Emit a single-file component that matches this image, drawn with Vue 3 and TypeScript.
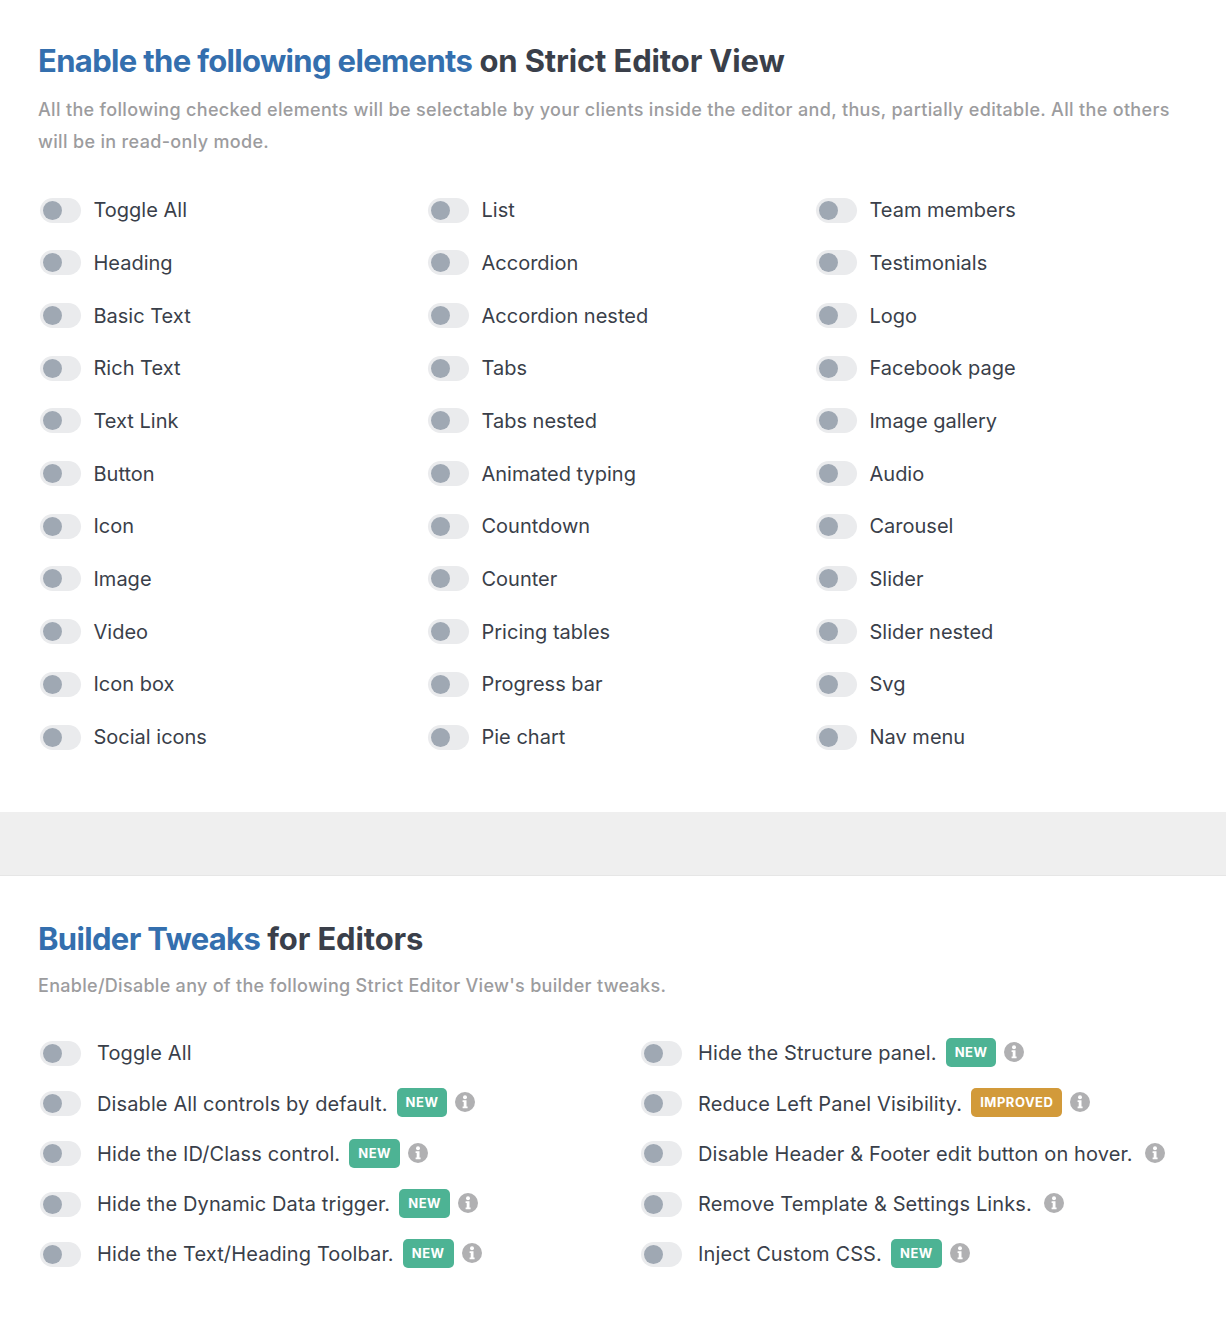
<script setup lang="ts">
interface Tweak { label: string; badge?: 'NEW' | 'IMPROVED'; info?: boolean }

const elementColumns: string[][] = [
  ['Toggle All', 'Heading', 'Basic Text', 'Rich Text', 'Text Link', 'Button', 'Icon', 'Image', 'Video', 'Icon box', 'Social icons'],
  ['List', 'Accordion', 'Accordion nested', 'Tabs', 'Tabs nested', 'Animated typing', 'Countdown', 'Counter', 'Pricing tables', 'Progress bar', 'Pie chart'],
  ['Team members', 'Testimonials', 'Logo', 'Facebook page', 'Image gallery', 'Audio', 'Carousel', 'Slider', 'Slider nested', 'Svg', 'Nav menu'],
]

const tweakColumns: Tweak[][] = [
  [
    { label: 'Toggle All' },
    { label: 'Disable All controls by default.', badge: 'NEW', info: true },
    { label: 'Hide the ID/Class control.', badge: 'NEW', info: true },
    { label: 'Hide the Dynamic Data trigger.', badge: 'NEW', info: true },
    { label: 'Hide the Text/Heading Toolbar.', badge: 'NEW', info: true },
  ],
  [
    { label: 'Hide the Structure panel.', badge: 'NEW', info: true },
    { label: 'Reduce Left Panel Visibility.', badge: 'IMPROVED', info: true },
    { label: 'Disable Header & Footer edit button on hover.', info: true },
    { label: 'Remove Template & Settings Links.', info: true },
    { label: 'Inject Custom CSS.', badge: 'NEW', info: true },
  ],
]
</script>

<template>
  <main class="page">
    <section class="panel first">
      <h2 class="title"><span class="accent">Enable the following elements</span> on Strict Editor View</h2>
      <p class="desc">All the following checked elements will be selectable by your clients inside the editor and, thus, partially editable. All the others will be in read-only mode.</p>
      <div class="elements">
        <ul v-for="(col, i) in elementColumns" :key="i" class="element-col">
          <li v-for="item in col" :key="item" class="element-row">
            <span class="toggle"><span class="knob"></span></span>
            <span class="label">{{ item }}</span>
          </li>
        </ul>
      </div>
    </section>

    <div class="band"></div>

    <section class="panel second">
      <h2 class="title"><span class="accent">Builder Tweaks</span> for Editors</h2>
      <p class="desc single">Enable/Disable any of the following Strict Editor View's builder tweaks.</p>
      <div class="tweaks">
        <ul v-for="(col, i) in tweakColumns" :key="i" class="tweak-col">
          <li v-for="t in col" :key="t.label" class="tweak-row">
            <span class="toggle"><span class="knob"></span></span>
            <span class="label tweak-label">{{ t.label }}</span>
            <span v-if="t.badge" class="badge" :class="{ improved: t.badge === 'IMPROVED' }">{{ t.badge }}</span>
            <svg v-if="t.info" class="info" :class="{ plain: !t.badge }" viewBox="0 0 20 20" width="20" height="20" aria-hidden="true">
              <circle cx="10" cy="10" r="10" fill="#b0b0b2" />
              <circle cx="10" cy="5.2" r="2" fill="#fff" />
              <path d="M7.6 8.2h3.9v6.3h1.1v1.7H7.6v-1.7h1.1V9.9H7.6z" fill="#fff" />
            </svg>
          </li>
        </ul>
      </div>
    </section>
  </main>
</template>

<style>
html, body { margin: 0; background: #fff; }
</style>

<style scoped>
.page {
  width: 1226px;
  height: 1320px;
  overflow: hidden;
  background: #fff;
  font-family: Inter, "Noto Sans", sans-serif;
  color: #3a3f4a;
}
.panel { padding: 0 38px; }
.first { padding-top: 41px; height: 812px; box-sizing: border-box; }
.second { padding-top: 43px; }
.title {
  margin: 0;
  font-size: 31px;
  line-height: 40px;
  font-weight: 700;
  letter-spacing: -0.14px;
  color: #3a3f4a;
}
.accent { color: #346fae; letter-spacing: -0.66px; }
.desc {
  margin: 13px 0 0;
  font-size: 18px;
  line-height: 32px;
  font-weight: 500;
  letter-spacing: 0.33px;
  color: #9c9c9e;
}
.desc.single { margin-top: 11px; letter-spacing: 0.29px; }
.elements {
  display: grid;
  grid-template-columns: repeat(3, 388px);
  margin-top: 25.8px;
  padding-left: 2px;
}
.element-col, .tweak-col { list-style: none; margin: 0; padding: 0; }
.element-row {
  display: flex;
  align-items: center;
  gap: 12.5px;
  height: 52.7px;
}
.toggle {
  display: block;
  flex: none;
  box-sizing: border-box;
  width: 41px;
  height: 25px;
  padding: 3px;
  border-radius: 13px;
  background: #eaebed;
}
.knob {
  display: block;
  width: 19px;
  height: 19px;
  border-radius: 50%;
  background: #9fa8b3;
}
.label {
  font-size: 20px;
  line-height: 26px;
  color: #3a3f4a;
}
.tweaks {
  display: grid;
  grid-template-columns: 601px 1fr;
  margin-top: 26.3px;
  padding-left: 2px;
}
.tweak-row {
  display: flex;
  align-items: center;
  height: 50.25px;
}
.tweak-label { margin-left: 16px; letter-spacing: 0.12px; }
.badge {
  display: block;
  flex: none;
  margin-left: 9px;
  padding: 0 9px;
  height: 29px;
  line-height: 29px;
  border-radius: 5px;
  margin-top: -1.4px;
  background: #4db394;
  color: #fff;
  font-size: 13px;
  font-weight: 700;
  letter-spacing: 0.5px;
}
.badge.improved { background: #d29a3a; }
.info { flex: none; margin-left: 8px; margin-top: -2.4px; }
.info.plain { margin-left: 12px; }
.band {
  height: 64px;
  box-sizing: border-box;
  background: #efefef;
  border-bottom: 1px solid #e6e6e6;
}
</style>
